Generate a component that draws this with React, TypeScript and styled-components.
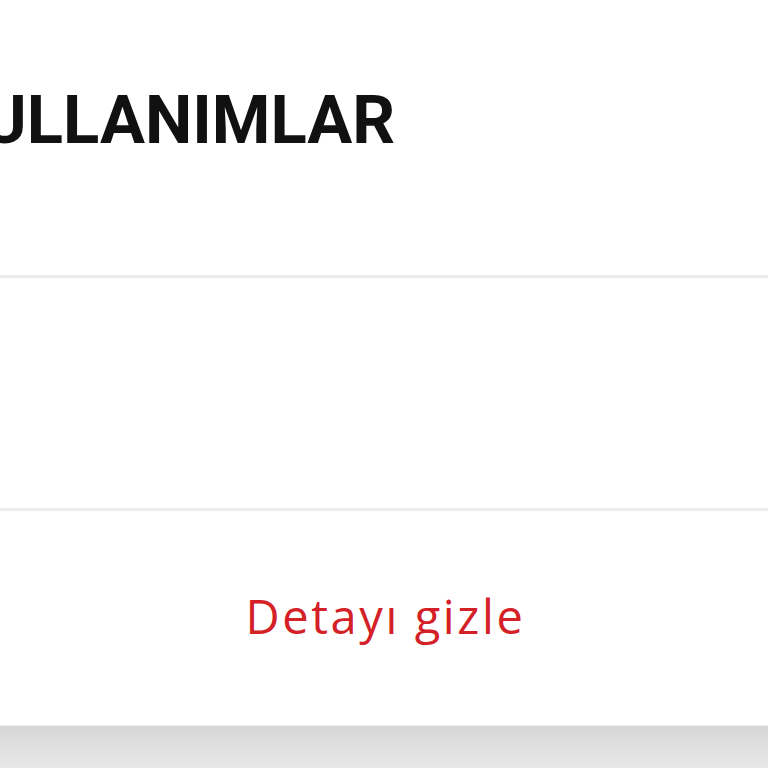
import React from 'react';
import styled, { createGlobalStyle } from 'styled-components';

const GlobalStyle = createGlobalStyle`
  html, body {
    margin: 0;
    padding: 0;
    background: #e6e6e6;
  }
  #root {
    width: 768px;
    height: 768px;
    overflow: hidden;
  }
`;

const Page = styled.div`
  display: flex;
  flex-direction: column;
  height: 768px;
`;

const Card = styled.div`
  display: flex;
  flex-direction: column;
  background: #ffffff;
  height: 725px;
  flex-shrink: 0;
`;

const Header = styled.div`
  height: 275px;
  display: flex;
  align-items: flex-start;
  overflow: hidden;
  padding-top: 82px;
  box-sizing: border-box;
`;

const Title = styled.h1`
  margin: 0 0 0 -60px;
  font-family: Roboto, 'Liberation Sans', Arial, sans-serif;
  font-weight: 700;
  font-size: 67px;
  line-height: 76px;
  color: #111111;
  white-space: nowrap;
`;

const Divider = styled.div`
  height: 3px;
  background: #ebebeb;
  flex-shrink: 0;
`;

const Section = styled.div<{ h: number }>`
  height: ${(p) => p.h}px;
  flex-shrink: 0;
`;

const Footer = styled.div`
  flex: 1;
  display: flex;
  align-items: center;
  justify-content: center;
  padding-bottom: 4px;
`;

const ToggleLink = styled.button`
  border: none;
  background: none;
  padding: 0 0 0 3px;
  font-family: 'Open Sans', 'Noto Sans', sans-serif;
  font-size: 47px;
  letter-spacing: 2.6px;
  color: #d42027;
  cursor: pointer;
`;

const BottomBar = styled.div`
  flex: 1;
  border-top: 1px solid #eeeeee;
  background: linear-gradient(#d7d7d7, #e7e7e7);
`;

export default function App() {
  return (
    <>
      <GlobalStyle />
      <Page>
        <Card>
          <Header>
            <Title>KULLANIMLAR</Title>
          </Header>
          <Divider />
          <Section h={230} />
          <Divider />
          <Footer>
            <ToggleLink>Detayı gizle</ToggleLink>
          </Footer>
        </Card>
        <BottomBar />
      </Page>
    </>
  );
}
